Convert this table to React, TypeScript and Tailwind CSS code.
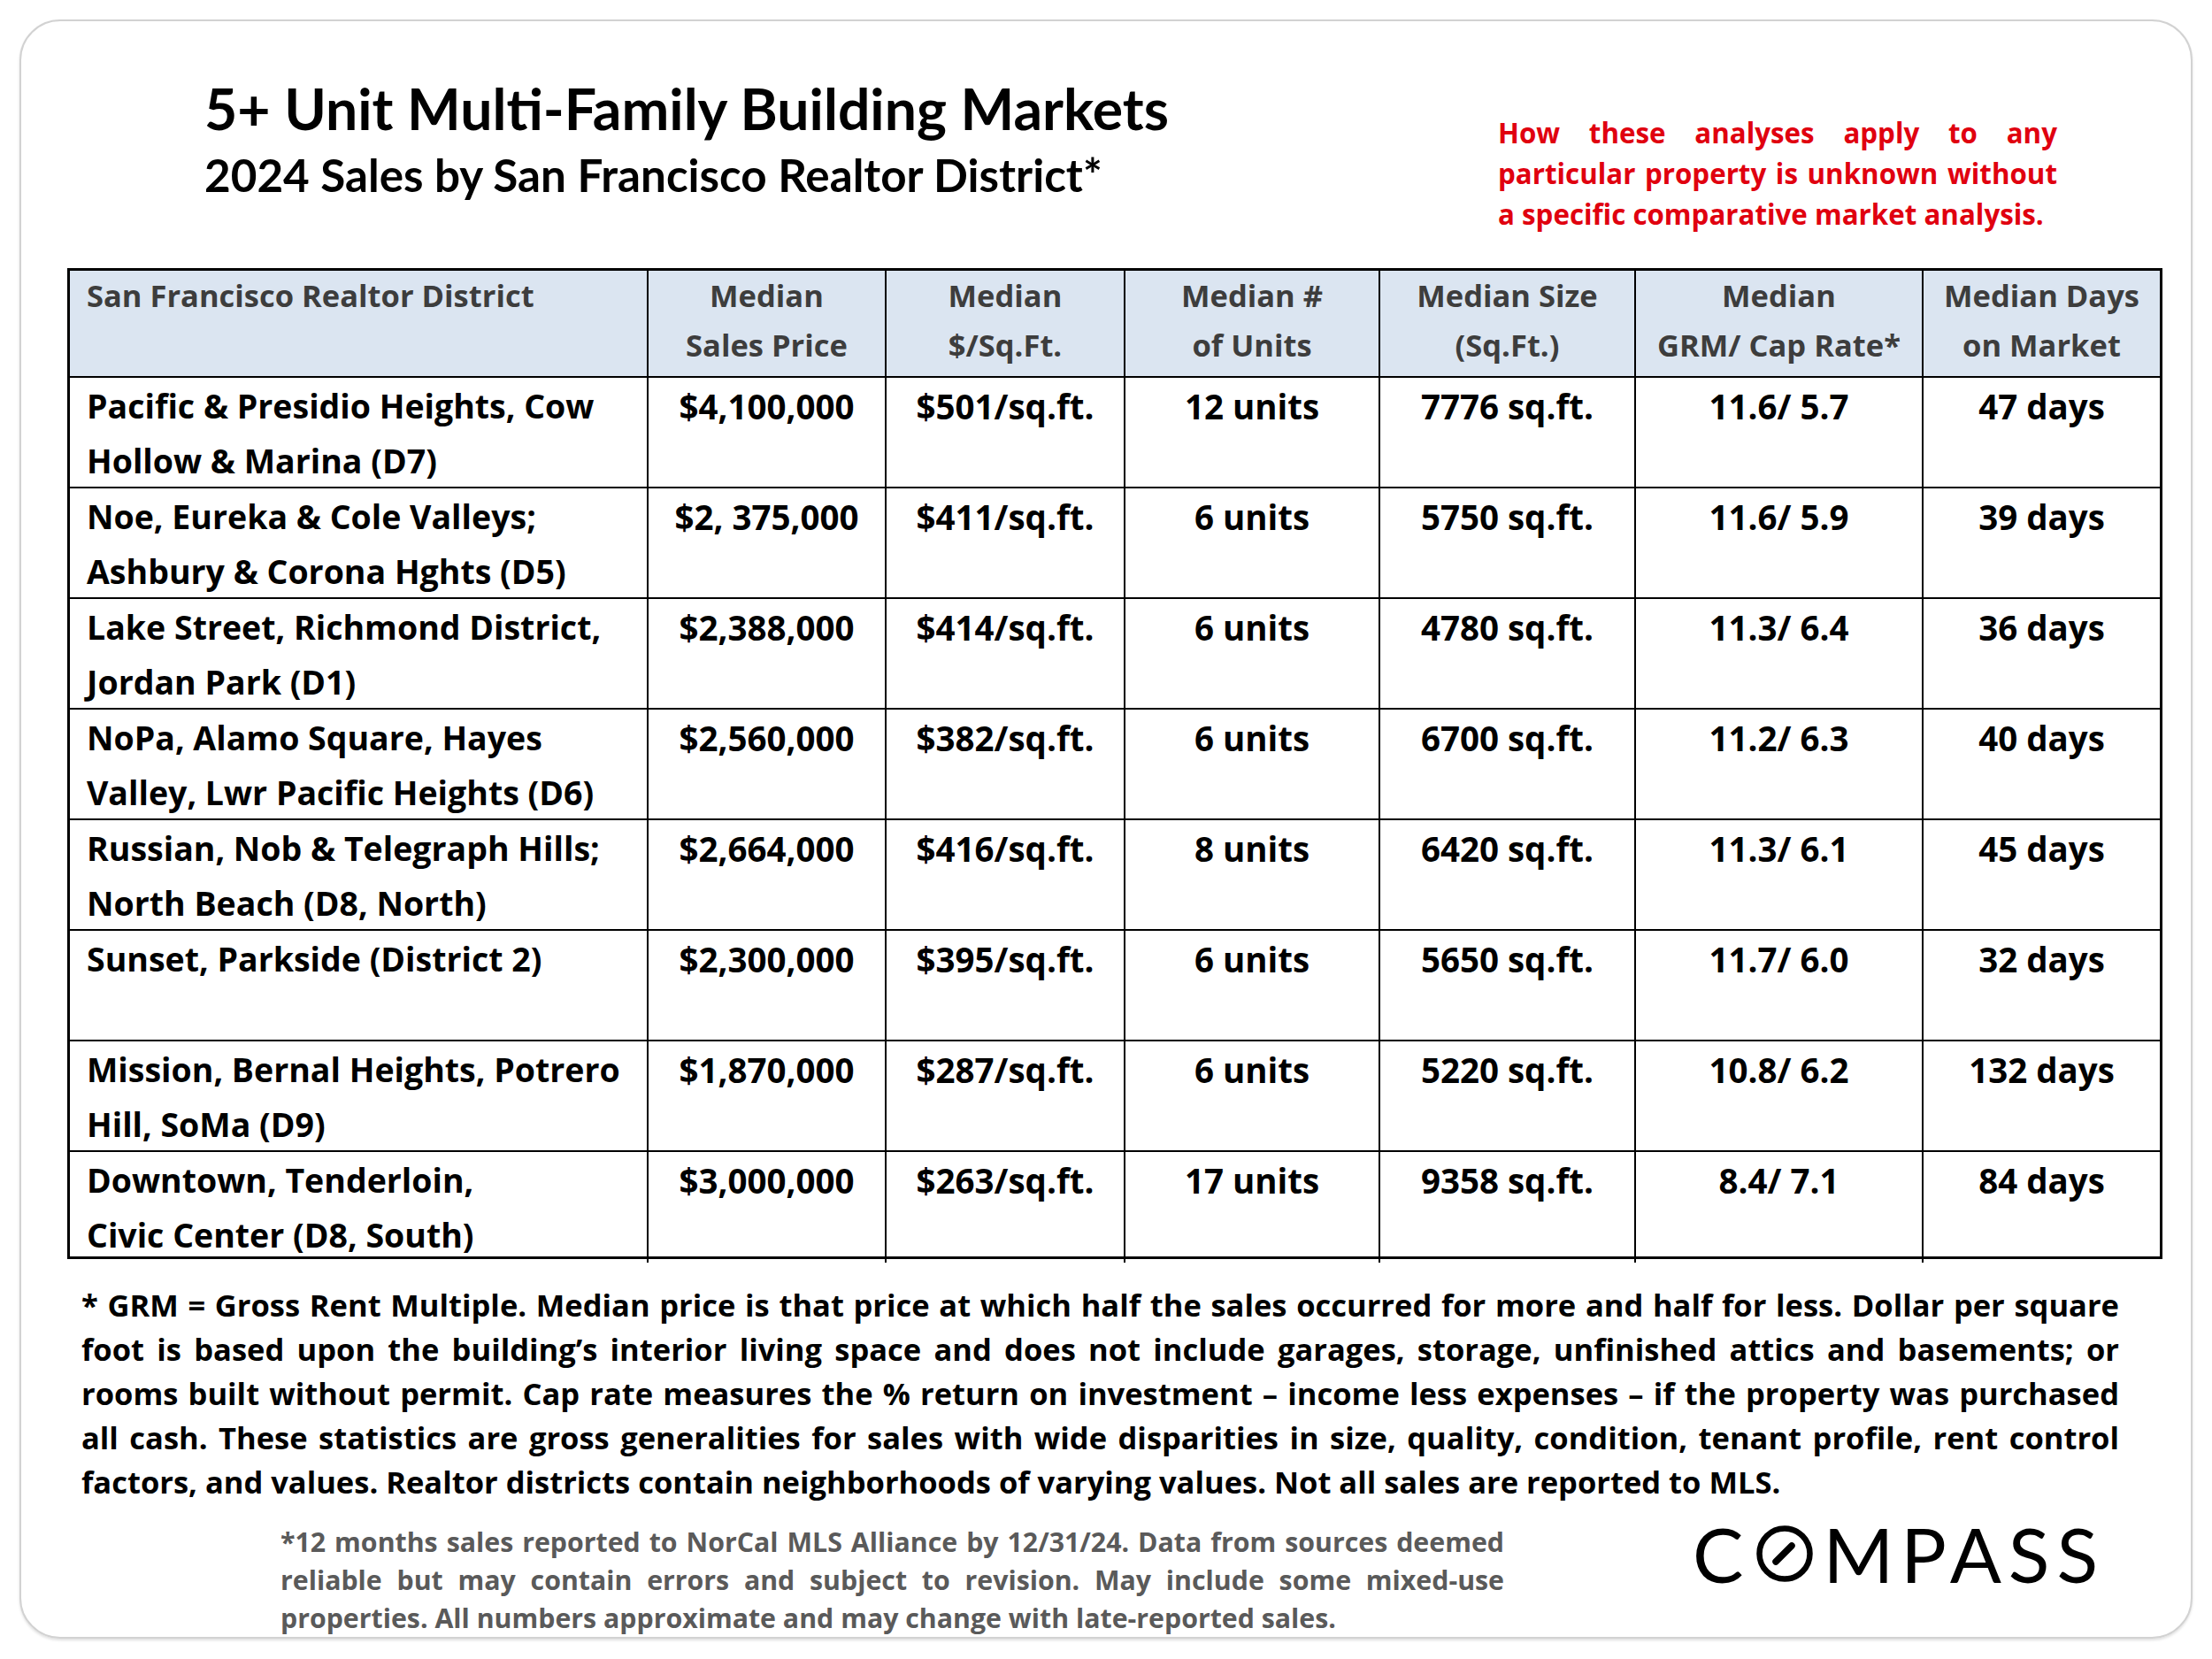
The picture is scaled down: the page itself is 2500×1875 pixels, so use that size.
const lato = "font-['Lato',sans-serif]";
const body = "font-['Open_Sans',sans-serif]";

type Row = {
  district: string[];
  price: string;
  ppsf: string;
  units: string;
  size: string;
  grm: string;
  dom: string;
};

const rows: Row[] = [
  { district: ["Pacific & Presidio Heights, Cow", "Hollow & Marina (D7)"], price: "$4,100,000", ppsf: "$501/sq.ft.", units: "12 units", size: "7776 sq.ft.", grm: "11.6/ 5.7", dom: "47 days" },
  { district: ["Noe, Eureka & Cole Valleys;", "Ashbury & Corona Hghts (D5)"], price: "$2, 375,000", ppsf: "$411/sq.ft.", units: "6 units", size: "5750 sq.ft.", grm: "11.6/ 5.9", dom: "39 days" },
  { district: ["Lake Street, Richmond District,", "Jordan Park (D1)"], price: "$2,388,000", ppsf: "$414/sq.ft.", units: "6 units", size: "4780 sq.ft.", grm: "11.3/ 6.4", dom: "36 days" },
  { district: ["NoPa, Alamo Square, Hayes", "Valley, Lwr Pacific Heights (D6)"], price: "$2,560,000", ppsf: "$382/sq.ft.", units: "6 units", size: "6700 sq.ft.", grm: "11.2/ 6.3", dom: "40 days" },
  { district: ["Russian, Nob & Telegraph Hills;", "North Beach (D8, North)"], price: "$2,664,000", ppsf: "$416/sq.ft.", units: "8 units", size: "6420 sq.ft.", grm: "11.3/ 6.1", dom: "45 days" },
  { district: ["Sunset, Parkside (District 2)"], price: "$2,300,000", ppsf: "$395/sq.ft.", units: "6 units", size: "5650 sq.ft.", grm: "11.7/ 6.0", dom: "32 days" },
  { district: ["Mission, Bernal Heights, Potrero", "Hill, SoMa (D9)"], price: "$1,870,000", ppsf: "$287/sq.ft.", units: "6 units", size: "5220 sq.ft.", grm: "10.8/ 6.2", dom: "132 days" },
  { district: ["Downtown, Tenderloin,", "Civic Center (D8, South)"], price: "$3,000,000", ppsf: "$263/sq.ft.", units: "17 units", size: "9358 sq.ft.", grm: "8.4/ 7.1", dom: "84 days" },
];

const headers: string[][] = [
  ["Median", "Sales Price"],
  ["Median", "$/Sq.Ft."],
  ["Median #", "of Units"],
  ["Median Size", "(Sq.Ft.)"],
  ["Median", "GRM/ Cap Rate*"],
  ["Median Days", "on Market"],
];

const footnote = [
  "* GRM = Gross Rent Multiple. Median price is that price at which half the sales occurred for more and half for less. Dollar per square",
  "foot is based upon the building’s interior living space and does not include garages, storage, unfinished attics and basements; or",
  "rooms built without permit. Cap rate measures the % return on investment – income less expenses – if the property was purchased",
  "all cash. These statistics are gross generalities for sales with wide disparities in size, quality, condition, tenant profile, rent control",
];

const note = [
  "*12 months sales reported to NorCal MLS Alliance by 12/31/24. Data from sources deemed",
  "reliable but may contain errors and subject to revision. May include some mixed-use",
];

const gridCols = "grid grid-cols-[652px_269px_270px_288px_289px_325px_269px]";

function Cell({ children, first, top }: { children: React.ReactNode; first?: boolean; top?: boolean }) {
  return (
    <div
      className={`${first ? "pl-[19px] text-left" : "border-l-2 text-center"} ${top ? "" : "border-t-2"} border-black`}
    >
      {children}
    </div>
  );
}

function CompassLogo() {
  return (
    <div className={`flex items-center text-[86px] leading-none font-normal text-black ${lato}`}>
      <span>C</span>
      <svg width="64" height="64" viewBox="0 0 64 64" className="ml-[15px] mr-[11px]">
        <circle cx="32" cy="32" r="28.5" fill="none" stroke="#000" strokeWidth="6.5" />
        <line x1="22" y1="41" x2="40" y2="23" stroke="#000" strokeWidth="7.5" strokeLinecap="round" />
      </svg>
      <span className="tracking-[8px]">MPASS</span>
    </div>
  );
}

export default function App() {
  return (
    <div className="min-h-screen bg-white">
      <div className="ml-[22px] pt-[22px]">
        <div className={`w-[2456px] h-[1830px] border-2 border-[#d2d2d2] rounded-[46px] shadow-[0_2px_3px_rgba(0,0,0,0.12)] ${body}`}>
          {/* heading */}
          <div className="flex h-[279px]">
            <div className={`ml-[207px] pt-[68px] ${lato}`}>
              <h1 className="text-[64.3px] leading-[61px] font-bold text-black whitespace-nowrap">
                5+ Unit Multi-Family Building Markets
              </h1>
              <h2 className="mt-[20px] text-[51.2px] leading-[49px] font-bold text-black whitespace-nowrap">
                2024 Sales by San Francisco Realtor District*
              </h2>
            </div>
            <div className="ml-auto mr-[151px] pt-[103px] w-[632px] text-[31.3px] leading-[46px] font-bold text-[#e0000f]">
              <div className="whitespace-nowrap text-justify [text-align-last:justify]">How these analyses apply to any</div>
              <div className="whitespace-nowrap text-justify [text-align-last:justify]">particular property is unknown without</div>
              <div className="whitespace-nowrap">a specific comparative market analysis.</div>
            </div>
          </div>

          {/* table */}
          <div className="ml-[52px] w-[2368px] border-[3px] border-black">
            <div className={`${gridCols} h-[119px] bg-[#dbe5f1] text-[34.5px] leading-[56px] font-bold text-[#3d3d3d]`}>
              <Cell first top>
                <div className="whitespace-nowrap">San Francisco Realtor District</div>
              </Cell>
              {headers.map((h) => (
                <Cell key={h.join()} top>
                  {h.map((l) => (
                    <div key={l} className="whitespace-nowrap">
                      {l}
                    </div>
                  ))}
                </Cell>
              ))}
            </div>
            {rows.map((r, i) => (
              <div
                key={r.price}
                className={`${gridCols} ${i === rows.length - 1 ? "h-[120px]" : "h-[125px]"} leading-[62px] font-bold text-black`}
              >
                <Cell first>
                  <div className="pt-[1px] text-[37.5px]">
                    {r.district.map((l) => (
                      <div key={l} className="whitespace-nowrap">
                        {l}
                      </div>
                    ))}
                  </div>
                </Cell>
                {[r.price, r.ppsf, r.units, r.size, r.grm, r.dom].map((v, j) => (
                  <Cell key={j}>
                    <div className="pt-[1px] text-[38.5px] whitespace-nowrap">{v}</div>
                  </Cell>
                ))}
              </div>
            ))}
          </div>

          {/* footnote */}
          <div className="ml-[68px] mt-[27px] w-[2303px] text-[34.5px] leading-[50px] font-bold text-black">
            {footnote.map((l) => (
              <div key={l} className="whitespace-nowrap text-justify [text-align-last:justify]">
                {l}
              </div>
            ))}
            <div className="whitespace-nowrap">
              factors, and values. Realtor districts contain neighborhoods of varying values. Not all sales are reported to MLS.
            </div>
          </div>

          {/* source note + logo */}
          <div className="mt-[21px] flex items-start">
            <div className="ml-[293px] w-[1383px] text-[30.3px] leading-[43px] font-bold text-[#5a5a5a]">
              {note.map((l) => (
                <div key={l} className="whitespace-nowrap text-justify [text-align-last:justify]">
                  {l}
                </div>
              ))}
              <div className="whitespace-nowrap">
                properties. All numbers approximate and may change with late-reported sales.
              </div>
            </div>
            <div className="ml-[213px] -mt-[8px]">
              <CompassLogo />
            </div>
          </div>
        </div>
      </div>
    </div>
  );
}
